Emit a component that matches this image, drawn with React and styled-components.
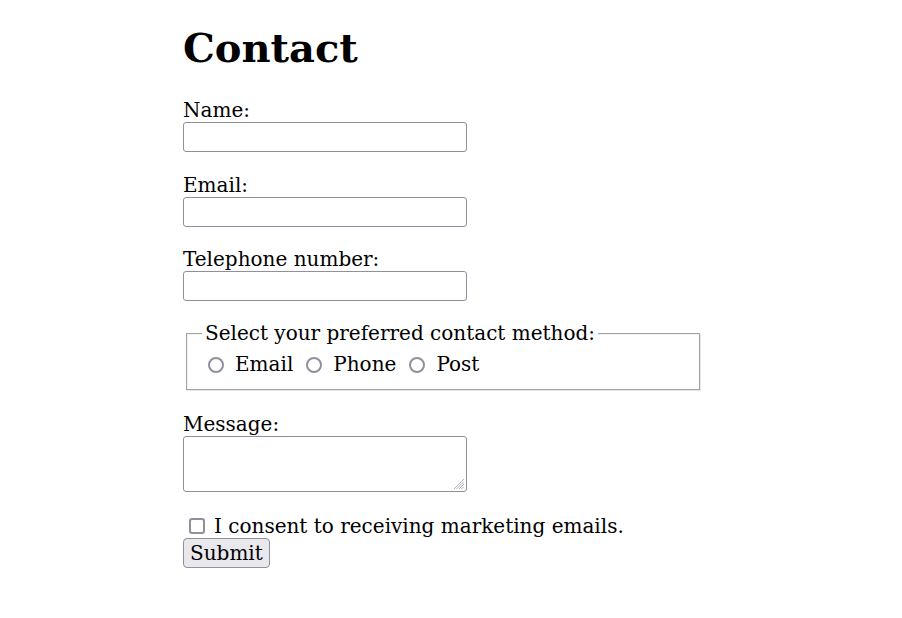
import React from "react";
import styled, { createGlobalStyle } from "styled-components";

const GlobalStyle = createGlobalStyle`
  html, body {
    margin: 0;
    padding: 0;
    background: #fff;
  }
  body {
    font-family: "DejaVu Serif", "Liberation Serif", serif;
    font-size: 20px;
    color: #000;
  }
`;

const Page = styled.main`
  width: 536px;
  margin: 0 auto;
`;

const Title = styled.h1`
  margin: 26px 0 0;
  font-size: 40px;
  line-height: 44px;
  font-weight: bold;
`;

const Form = styled.form`
  display: flex;
  flex-direction: column;
  align-items: flex-start;
`;

const Field = styled.div`
  display: flex;
  flex-direction: column;
  align-items: flex-start;
  margin-top: ${({ $top }) => $top}px;
`;

const Label = styled.label`
  line-height: 24px;
`;

const TextInput = styled.input`
  box-sizing: border-box;
  width: 284px;
  height: 30px;
  margin: 0;
  padding: 2px 4px;
  border: 1px solid #8f8f9d;
  border-radius: 3px;
  font: inherit;
  background: #fff;
`;

const resizer =
  "data:image/svg+xml;utf8," +
  encodeURIComponent(
    '<svg xmlns="http://www.w3.org/2000/svg" width="11" height="11"><g stroke="#9a9aa4" stroke-width="0.8"><line x1="11" y1="1" x2="1" y2="11"/><line x1="11" y1="3.5" x2="3.5" y2="11"/><line x1="11" y1="6" x2="6" y2="11"/><line x1="11" y1="8.5" x2="8.5" y2="11"/></g></svg>'
  );

const TextArea = styled.textarea`
  box-sizing: border-box;
  width: 284px;
  height: 56px;
  margin: 0;
  padding: 2px 4px;
  border: 1px solid #8f8f9d;
  border-radius: 3px;
  font: inherit;
  resize: none;
  display: block;
  background: #fff url("${resizer}") no-repeat right 2px bottom 2px;
`;

const Fieldset = styled.fieldset`
  box-sizing: border-box;
  width: 514px;
  margin: 20.5px 0 0 3px;
  padding: 7px 14px 13px;
  border: 1px solid #a3a3a3;
  box-shadow: 1px 1px 0 #e6e6e6, inset 1px 1px 0 #f2f2f2;
  min-width: 0;
`;

const Legend = styled.legend`
  padding: 0 3px;
  margin-left: 1px;
  line-height: 23px;
`;

const Options = styled.div`
  display: flex;
  align-items: center;
  line-height: 24px;
`;

const Option = styled.label`
  display: flex;
  align-items: center;
  gap: 11px;
  margin-right: 13px;
  margin-left: ${({ $first }) => ($first ? 7 : 0)}px;
`;

const Radio = styled.input.attrs({ type: "radio" })`
  appearance: none;
  box-sizing: border-box;
  width: 16px;
  height: 16px;
  margin: 0;
  border: 2px solid #8f8f9d;
  border-radius: 50%;
  background: #fff;
  position: relative;
  top: 1px;
`;

const CheckRow = styled.label`
  display: flex;
  align-items: center;
  gap: 9px;
  margin-top: 22px;
  padding-left: 6px;
  line-height: 24px;
`;

const Checkbox = styled.input.attrs({ type: "checkbox" })`
  appearance: none;
  box-sizing: border-box;
  width: 16px;
  height: 16px;
  margin: 0;
  border: 2px solid #8f8f9d;
  border-radius: 3px;
  background: #fff;
  position: relative;
  top: 0;
`;

const SubmitButton = styled.button`
  box-sizing: border-box;
  height: 30px;
  padding: 0 6px;
  margin: 0;
  border: 1px solid #8f8f9d;
  border-radius: 4px;
  background: #e9e9ed;
  font: inherit;
  color: #000;
  line-height: 26px;
`;

export default function App() {
  return (
    <>
      <GlobalStyle />
      <Page>
        <Title>Contact</Title>
        <Form onSubmit={(e) => e.preventDefault()}>
          <Field $top={28}>
            <Label htmlFor="name">Name:</Label>
            <TextInput id="name" type="text" />
          </Field>
          <Field $top={20.5}>
            <Label htmlFor="email">Email:</Label>
            <TextInput id="email" type="email" />
          </Field>
          <Field $top={20.5}>
            <Label htmlFor="tel">Telephone number:</Label>
            <TextInput id="tel" type="tel" />
          </Field>
          <Fieldset>
            <Legend>Select your preferred contact method:</Legend>
            <Options>
              <Option $first>
                <Radio name="method" value="email" />
                Email
              </Option>
              <Option>
                <Radio name="method" value="phone" />
                Phone
              </Option>
              <Option>
                <Radio name="method" value="post" />
                Post
              </Option>
            </Options>
          </Fieldset>
          <Field $top={22}>
            <Label htmlFor="msg">Message:</Label>
            <TextArea id="msg" />
          </Field>
          <CheckRow>
            <Checkbox />
            I consent to receiving marketing emails.
          </CheckRow>
          <SubmitButton type="submit">Submit</SubmitButton>
        </Form>
      </Page>
    </>
  );
}
